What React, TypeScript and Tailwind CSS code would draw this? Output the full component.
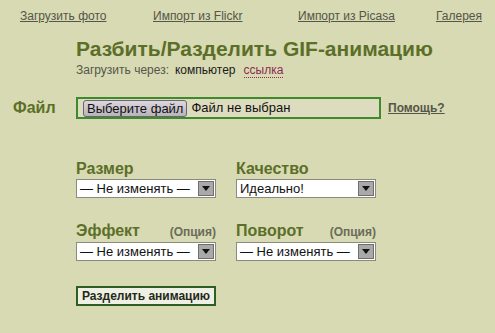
import { ReactNode } from "react";

const navLinks = [
  { label: "Загрузить фото", w: "w-[133px]" },
  { label: "Импорт из Flickr", w: "w-[145px]" },
  { label: "Импорт из Picasa", w: "w-[138px]" },
  { label: "Галерея", w: "" },
];

function FakeSelect({ value }: { value: string }) {
  return (
    <div className="flex h-[19px] w-[140px] items-stretch border border-[#8a8a80] bg-white">
      <div className="flex flex-1 items-center pl-[3px] text-[13px] leading-none text-[#111]">
        {value}
      </div>
      <div className="m-[1px] flex w-[16px] items-center justify-center border border-[#6e6e6e] bg-[#a9a9a9]">
        <svg width="8" height="5" viewBox="0 0 8 5">
          <path d="M0 0 H8 L4 5 Z" fill="#111" />
        </svg>
      </div>
    </div>
  );
}

function Field({
  label,
  optional,
  children,
}: {
  label: string;
  optional?: boolean;
  children: ReactNode;
}) {
  return (
    <div className="flex w-[140px] flex-col">
      <div className="flex items-baseline justify-between">
        <span className="text-[16px] font-bold leading-[16px] text-[#5c6f28]">{label}</span>
        {optional && (
          <span className="text-[12px] font-bold leading-[16px] text-[#6b6b5a]">(Опция)</span>
        )}
      </div>
      <div className="mt-[2px]">{children}</div>
    </div>
  );
}

export default function App() {
  return (
    <div className="h-[333px] w-[495px] overflow-hidden bg-[#d7dab3] font-['Liberation_Sans',Arial,sans-serif]">
      {/* верхнее меню */}
      <nav className="flex pl-[20px] pt-[9px] text-[12px] leading-[14px] text-[#555548]">
        {navLinks.map((l) => (
          <div key={l.label} className={l.w}>
            <a href="#" className="underline">
              {l.label}
            </a>
          </div>
        ))}
      </nav>

      {/* заголовок */}
      <div className="pl-[76px] pt-[14px]">
        <h1 className="text-[21px] font-bold leading-[24px] text-[#5c6f28]">
          Разбить/Разделить GIF-анимацию
        </h1>
        <div className="mt-[2px] flex gap-[6px] text-[12px] leading-[14px]">
          <span className="text-[#55554a]">Загрузить через:</span>
          <span className="text-[#1a1a1a]">компьютер</span>
          <span className="ml-[2px] border-b border-dotted border-[#8c2c50] text-[#8c2c50]">ссылка</span>
        </div>
      </div>

      {/* файл */}
      <div className="mt-[18px] flex items-center pl-[13px]">
        <div className="w-[63px] text-[16px] font-bold text-[#5c6f28]">Файл</div>
        <div className="flex h-[22px] w-[305px] items-center border-2 border-[#3f8a2c] bg-[#dddcbf] pl-[5px]">
          <button className="h-[17px] rounded-[3px] border border-[#6b6570] bg-gradient-to-b from-[#dcd8de] to-[#b9b3bb] px-[3px] text-[13px] leading-none text-[#111]">
            Выберите файл
          </button>
          <span className="ml-[4px] text-[13px] text-[#111]">Файл не выбран</span>
        </div>
        <a href="#" className="ml-[7px] text-[12px] font-bold text-[#55554a] underline">
          Помощь?
        </a>
      </div>

      {/* настройки */}
      <div className="mt-[41px] grid grid-cols-[140px_140px] gap-x-[20px] gap-y-[25px] pl-[76px]">
        <Field label="Размер">
          <FakeSelect value="— Не изменять —" />
        </Field>
        <Field label="Качество">
          <FakeSelect value="Идеально!" />
        </Field>
        <Field label="Эффект" optional>
          <FakeSelect value="— Не изменять —" />
        </Field>
        <Field label="Поворот" optional>
          <FakeSelect value="— Не изменять —" />
        </Field>
      </div>

      <div className="mt-[25px] flex pl-[76px]">
        <button className="h-[20px] w-[140px] border-2 border-[#2f5e23] bg-[#eef0e4] text-[12px] font-bold leading-none text-[#1f2a1a]">
          Разделить анимацию
        </button>
      </div>
    </div>
  );
}
